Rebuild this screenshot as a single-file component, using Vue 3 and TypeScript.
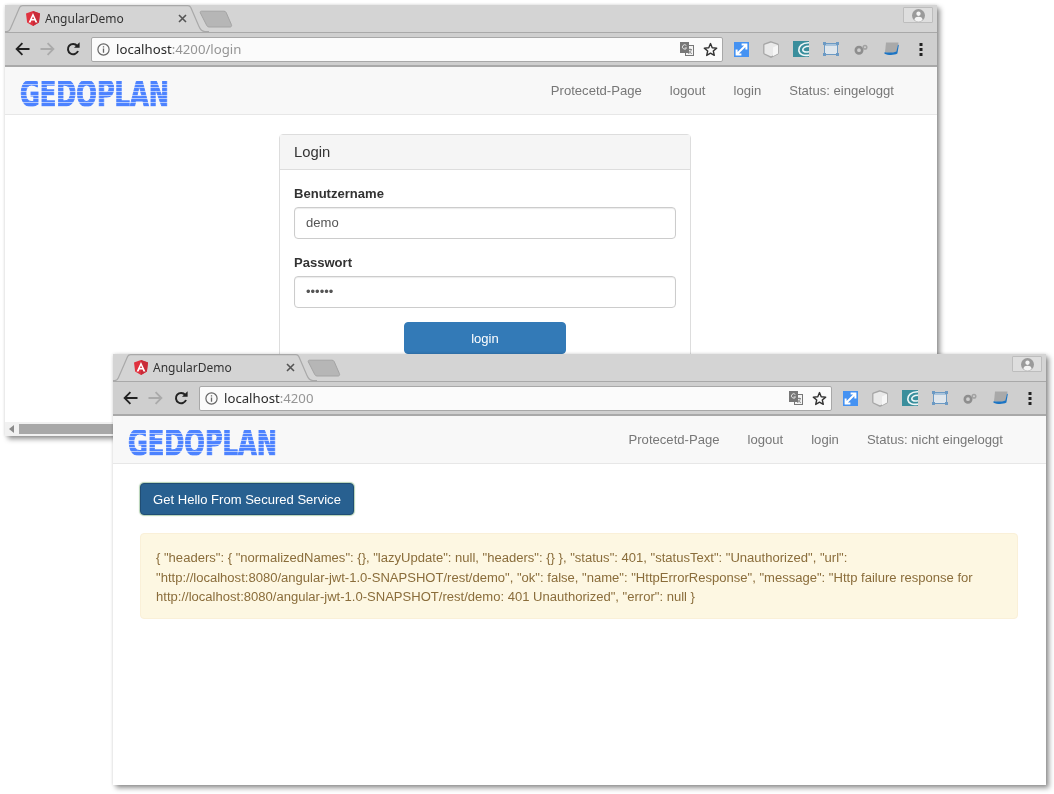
<script setup lang="ts">
interface BrowserWindow {
  id: string
  path: string
  status: string
}

const windows: BrowserWindow[] = [
  { id: 'login', path: ':4200/login', status: 'Status: eingeloggt' },
  { id: 'home', path: ':4200', status: 'Status: nicht eingeloggt' },
]

const navLinks = ['Protecetd-Page', 'logout', 'login']

const errorText =
  '{ "headers": { "normalizedNames": {}, "lazyUpdate": null, "headers": {} }, "status": 401, "statusText": "Unauthorized", "url": "http://localhost:8080/angular-jwt-1.0-SNAPSHOT/rest/demo", "ok": false, "name": "HttpErrorResponse", "message": "Http failure response for http://localhost:8080/angular-jwt-1.0-SNAPSHOT/rest/demo: 401 Unauthorized", "error": null }'
</script>

<template>
  <div class="desktop">
    <div v-for="win in windows" :key="win.id" class="window" :class="`window--${win.id}`">
      <!-- tab strip -->
      <div class="tabstrip">
        <svg class="tab-shape" width="240" height="27" viewBox="0 0 240 27">
          <path d="M0 26.5H2C3.6 26.5 4.6 25.6 5.4 23.8L14.6 2.6C15.2 1.2 16.2 .6 17.6 .6H183C184.4 .6 185.2 1.2 185.8 2.6L194 21.5C195.5 25 197 26.5 200 26.5H204" fill="#d4d4d4" stroke="#a9a9a9" stroke-width="1.2" />
          <path d="M196.5 6.2H219C220 6.2 220.8 6.7 221.2 7.6L226.4 19.6C227 21 226.4 22 225 22H204C203 22 202.2 21.5 201.8 20.6L195.4 8C194.9 7 195.4 6.2 196.5 6.2Z" fill="#b6b6b6" stroke="#a4a4a4" />
        </svg>
        <div class="tab">
          <svg class="favicon" width="14" height="15" viewBox="0 0 14 15">
            <path d="M7 0L14 2.4L12.9 11.6L7 15L1.1 11.6L0 2.4Z" fill="#e0323f" />
            <path d="M7 0L14 2.4L12.9 11.6L7 15Z" fill="#c92b38" />
            <path d="M7 2L2.6 11.4H4.6L5.4 9.5H8.6L9.4 11.4H11.4ZM8 7.9H6L7 5.4Z" fill="#fff" fill-rule="evenodd" />
          </svg>
          <span class="tab-title">AngularDemo</span>
          <svg class="tab-close" width="9" height="9" viewBox="0 0 9 9">
            <path d="M1 1L8 8M8 1L1 8" stroke="#555" stroke-width="1.6" />
          </svg>
        </div>
        <div class="profile">
          <svg width="13" height="13" viewBox="0 0 12 12">
            <circle cx="6" cy="6" r="6" fill="#9a9a9a" />
            <circle cx="6" cy="4.4" r="2" fill="#f4f4f4" />
            <path d="M2.2 10C2.6 7.8 4 7.2 6 7.2S9.4 7.8 9.8 10C8.8 11.2 7.4 11.7 6 11.7S3.2 11.2 2.2 10Z" fill="#f4f4f4" />
          </svg>
        </div>
      </div>

      <!-- toolbar -->
      <div class="toolbar">
        <button class="tool">
          <svg width="15" height="14" viewBox="0 0 15 14"><path d="M14.5 7H2M7.4 1.2L1.6 7L7.4 12.8" fill="none" stroke="#222" stroke-width="1.8" /></svg>
        </button>
        <button class="tool">
          <svg width="15" height="14" viewBox="0 0 15 14"><path d="M.5 7H13M7.6 1.2L13.4 7L7.6 12.8" fill="none" stroke="#aaa" stroke-width="1.8" /></svg>
        </button>
        <button class="tool">
          <svg width="14" height="14" viewBox="0 0 14 14">
            <path d="M12 9A5.2 5.2 0 1 1 11.2 3.8" fill="none" stroke="#222" stroke-width="2" />
            <path d="M8 5.8H13.6V.2Z" fill="#222" />
          </svg>
        </button>
        <div class="omnibox">
          <svg class="info" width="13" height="13" viewBox="0 0 13 13">
            <circle cx="6.5" cy="6.5" r="5.6" fill="none" stroke="#666" stroke-width="1.2" />
            <path d="M6.5 5.6V9.8M6.5 3.2V4.5" stroke="#666" stroke-width="1.3" />
          </svg>
          <span class="url"><span class="host">localhost</span>{{ win.path }}</span>
          <svg class="translate" width="14" height="14" viewBox="0 0 14 14">
            <rect x="5.5" y="3.5" width="8" height="10" fill="#f4f4f4" stroke="#777" />
            <rect x="0" y="0" width="9" height="11" fill="#777" />
            <path d="M6.4 3.6A2.2 2.2 0 1 0 6.6 6H4.6" fill="none" stroke="#eee" stroke-width=".9" />
            <path d="M8 7.5H12M10 6.5V8M11.2 8C10.8 10 9.6 11 8.2 11.6M8.8 8.6C9.4 10 10.4 11 12 11.6" fill="none" stroke="#777" stroke-width=".8" />
          </svg>
          <svg class="star" width="15" height="15" viewBox="0 0 15 15">
            <path d="M7.5 1.6L9.2 5.7L13.7 6.1L10.3 9L11.3 13.4L7.5 11.1L3.7 13.4L4.7 9L1.3 6.1L5.8 5.7Z" fill="none" stroke="#333" stroke-width="1.4" stroke-linejoin="round" />
          </svg>
        </div>
        <button class="tool ext">
          <svg width="15" height="15" viewBox="0 0 15 15">
            <rect width="15" height="15" fill="#4592f2" />
            <path d="M3 12L12 3M7.6 2.6H12.4V7.4M2.6 7.6V12.4H7.4" fill="none" stroke="#fff" stroke-width="2" />
          </svg>
        </button>
        <button class="tool ext">
          <svg width="16" height="17" viewBox="0 0 16 17">
            <path d="M8 .8L14.6 3.2C15 3.4 15.2 3.7 15.2 4.1V12C15.2 12.4 15 12.7 14.6 13L8 16.2L1.4 13C1 12.7 .8 12.4 .8 12V4.1C.8 3.7 1 3.4 1.4 3.2Z" fill="#e9e9e9" stroke="#a6a6a6" stroke-width="1.3" />
            <path d="M10 6.6L15 4V12.6L10 15.2Z" fill="#f6f6f6" />
          </svg>
        </button>
        <button class="tool ext">
          <svg width="16" height="16" viewBox="0 0 15 15">
            <rect width="15" height="15" fill="#3a8e9c" />
            <path d="M15 1.6C8.5 1.4 4.8 5.4 5.6 9.6C6.2 12.6 10 14.2 15 13.2M15 5C11.4 4.8 9 6.6 9.2 8.6C9.4 10.2 12 10.8 15 10" fill="none" stroke="#eef7f8" stroke-width="1.5" />
          </svg>
        </button>
        <button class="tool ext">
          <svg width="16" height="14" viewBox="0 0 16 14">
            <rect x="1.5" y="1.5" width="13" height="11" fill="#dfe6ec" stroke="#6c9ac4" />
            <rect x="2" y="2" width="12" height="2" fill="#a9c4dc" />
            <rect width="3" height="3" fill="#6c9ac4" />
            <rect x="13" width="3" height="3" fill="#6c9ac4" />
            <rect y="11" width="3" height="3" fill="#6c9ac4" />
            <rect x="13" y="11" width="3" height="3" fill="#6c9ac4" />
          </svg>
        </button>
        <button class="tool ext">
          <svg width="14" height="11" viewBox="0 0 14 11">
            <circle cx="5" cy="6.2" r="3.2" fill="none" stroke="#8e8e8e" stroke-width="2.6" />
            <circle cx="11" cy="3.2" r="1.8" fill="none" stroke="#a2a2a2" stroke-width="1.5" />
          </svg>
        </button>
        <button class="tool ext">
          <svg width="15" height="14" viewBox="0 0 15 14">
            <path d="M2 .5H14.5L13 10C10 11 6 11.2 1 10.5Z" fill="#a9a9a9" />
            <path d="M.5 10.2C5 11 9.5 10.6 12.4 9.4L14 2.5L14.8 3.2L13.4 11.6C9.8 13.6 4 13.4 .5 11.8Z" fill="#1b74c4" />
          </svg>
        </button>
        <button class="tool ext">
          <svg width="4" height="13" viewBox="0 0 4 13">
            <rect x=".5" width="3" height="3" fill="#222" />
            <rect x=".5" y="5" width="3" height="3" fill="#222" />
            <rect x=".5" y="10" width="3" height="3" fill="#222" />
          </svg>
        </button>
      </div>

      <!-- page -->
      <nav class="navbar">
        <span class="brand"><span class="brand-text">GEDOPLAN</span></span>
        <ul class="nav-links">
          <li v-for="link in navLinks" :key="link">{{ link }}</li>
          <li>{{ win.status }}</li>
        </ul>
      </nav>

      <main v-if="win.id === 'login'" class="page page--login">
        <section class="card">
          <h3 class="card-heading">Login</h3>
          <div class="card-body">
            <label class="field-label">Benutzername</label>
            <div class="input">demo</div>
            <label class="field-label">Passwort</label>
            <div class="input input--dots">••••••</div>
            <button class="btn-login">login</button>
          </div>
        </section>
      </main>

      <main v-else class="page page--home">
        <button class="btn-hello">Get Hello From Secured Service</button>
        <div class="alert">{{ errorText }}</div>
      </main>

      <div v-if="win.id === 'login'" class="scrollbar">
        <span class="scroll-arrow"></span>
        <span class="scroll-thumb"></span>
      </div>
    </div>
  </div>
</template>

<style scoped>
.desktop {
  position: relative;
  width: 1054px;
  height: 794px;
  overflow: hidden;
  background: #fff;
  filter: blur(0.45px);
  font-family: "Liberation Sans", Arial, sans-serif;
}

.window {
  position: absolute;
  display: flex;
  flex-direction: column;
  background: #fff;
  box-shadow: 3px 3px 5px rgba(0, 0, 0, 0.42), 0 0 3px rgba(0, 0, 0, 0.12);
}
.window--login {
  left: 5px;
  top: 5px;
  width: 932px;
  height: 431px;
}
.window--home {
  left: 113px;
  top: 354px;
  width: 933px;
  height: 431px;
}

.tabstrip {
  position: relative;
  flex: none;
  height: 27px;
  background: #d4d4d4;
  overflow: hidden;
}
.tab-shape {
  position: absolute;
  left: 0;
  top: 0;
}
.tab {
  position: absolute;
  left: 21px;
  top: 5px;
  width: 161px;
  display: flex;
  align-items: center;
  height: 16px;
}
.favicon {
  flex: none;
}
.tab-title {
  margin-left: 5px;
  font: 12px "Noto Sans", "Open Sans", sans-serif;
  color: #333;
}
.tab-close {
  margin-left: auto;
}
.profile {
  position: absolute;
  right: 4px;
  top: 2px;
  width: 30px;
  height: 16px;
  display: flex;
  align-items: center;
  justify-content: center;
  background: #dedede;
  border: 1px solid #bdbdbd;
  box-sizing: border-box;
  border-radius: 1px;
}

.toolbar {
  flex: none;
  display: flex;
  align-items: center;
  height: 35px;
  box-sizing: border-box;
  padding: 0 1px 0 5px;
  background: #cfcfcf;
  border-top: 1px solid #a9a9a9;
  border-bottom: 2px solid #a9a9a9;
}
.tool {
  flex: none;
  width: 25px;
  height: 24px;
  padding: 0;
  border: 0;
  background: none;
  display: flex;
  align-items: center;
  justify-content: center;
}
.ext {
  width: 30px;
}
.omnibox {
  flex: 1;
  display: flex;
  align-items: center;
  height: 25px;
  margin: 0 3px 0 6px;
  padding: 0 4px 0 5px;
  box-sizing: border-box;
  background: #fbfbfb;
  border: 1px solid #a8a8a8;
  border-radius: 2px;
}
.info {
  flex: none;
}
.url {
  margin-left: 6px;
  font: 13.2px "Noto Sans", "Open Sans", sans-serif;
  color: #959595;
}
.host {
  color: #2a2a2a;
}
.translate {
  margin-left: auto;
}
.star {
  margin-left: 9px;
}

.navbar {
  flex: none;
  display: flex;
  align-items: center;
  height: 48px;
  box-sizing: border-box;
  padding: 0 43px 0 15px;
  background: #f8f8f8;
  border-bottom: 1px solid #e7e7e7;
}
.brand {
  flex: none;
  display: block;
  width: 147px;
  height: 26px;
  margin-top: 7px;
}
.brand-text {
  display: inline-block;
  font: bold 35px/26px "DejaVu Sans", sans-serif;
  transform: scaleX(0.69);
  transform-origin: left center;
  -webkit-text-stroke: 1.2px transparent;
  background: repeating-linear-gradient(180deg, #4c82ff 0 2.6px, #b3caff 2.6px 3.7px);
  -webkit-background-clip: text;
  background-clip: text;
  color: transparent;
}
.nav-links {
  display: flex;
  gap: 28px;
  margin: 0 0 0 auto;
  padding: 0;
  list-style: none;
  font-size: 13.1px;
  color: #777;
}

.page {
  flex: 1;
  min-height: 0;
  overflow: hidden;
}
.page--login {
  padding: 19px 0 0 274px;
}
.card {
  width: 412px;
  box-sizing: border-box;
  border: 1px solid #ddd;
  border-radius: 4px;
}
.card-heading {
  margin: 0;
  height: 35px;
  box-sizing: border-box;
  padding: 8px 14px;
  font-size: 14.8px;
  line-height: 18px;
  font-weight: 400;
  color: #333;
  background: #f5f5f5;
  border-bottom: 1px solid #ddd;
}
.card-body {
  display: flex;
  flex-direction: column;
  padding: 14px 14px 13px;
}
.field-label {
  font-size: 13.05px;
  line-height: 20px;
  font-weight: 700;
  color: #333;
  margin-bottom: 3px;
}
.input {
  height: 32px;
  box-sizing: border-box;
  padding: 0 11px;
  margin-bottom: 14px;
  border: 1px solid #ccc;
  border-radius: 4px;
  box-shadow: inset 0 1px 1px rgba(0, 0, 0, 0.08);
  font-size: 13.05px;
  line-height: 30px;
  color: #555;
}
.input--dots {
  font-size: 13px;
}
.btn-login {
  align-self: center;
  width: 162px;
  height: 32px;
  font: 13.05px "Liberation Sans", Arial, sans-serif;
  color: #fff;
  background: #337ab7;
  border: 1px solid #337ab7;
  border-radius: 4px;
}

.page--home {
  padding: 19px 28px 0 27px;
}
.btn-hello {
  display: block;
  width: 214px;
  height: 32px;
  padding: 0;
  font: 13.05px "Liberation Sans", Arial, sans-serif;
  color: #fff;
  background: #286090;
  border: 1px solid #204d74;
  border-radius: 4px;
  box-shadow: 0 0 1px 1px rgba(150, 190, 150, 0.7);
}
.alert {
  margin-top: 18px;
  padding: 14px 15px 11px;
  font-size: 13.05px;
  line-height: 19.5px;
  color: #8a6d3b;
  background: #fdf7e2;
  border: 1px solid #faf0d8;
  border-radius: 4px;
}

.scrollbar {
  flex: none;
  display: flex;
  align-items: center;
  height: 14px;
  background: #f1f1f1;
}
.scroll-arrow {
  width: 0;
  height: 0;
  margin: 0 5px 0 4px;
  border-style: solid;
  border-width: 4px 5px 4px 0;
  border-color: transparent #8a8a8a transparent transparent;
}
.scroll-thumb {
  flex: 1;
  height: 10px;
  background: #a8a8a8;
}
</style>
